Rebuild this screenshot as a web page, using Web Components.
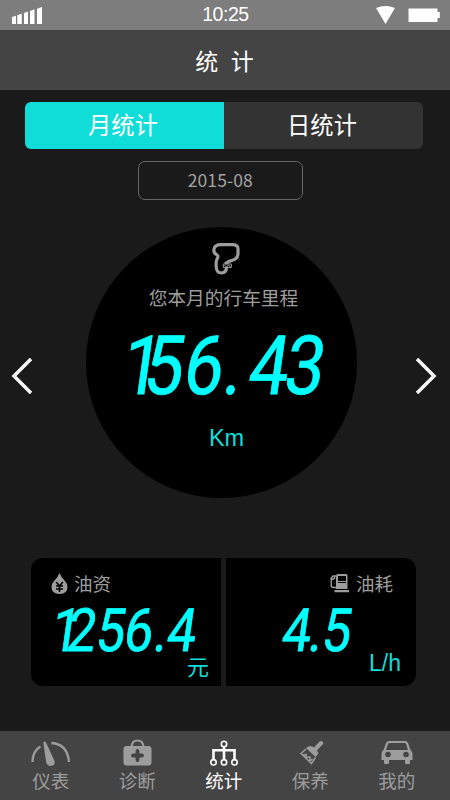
<!DOCTYPE html>
<html lang="zh-CN">
<head>
<meta charset="utf-8">
<title>统计</title>
<style>
html,body{margin:0;height:100%;background:#1a1a1a}
body{font-family:"Liberation Sans","Noto Sans CJK SC",sans-serif;color:#fff}
</style>
</head>
<body>
<stats-app></stats-app>
<script>
const define = (name, html, setup) => {
  const t = document.createElement('template');
  t.innerHTML = html;
  customElements.define(name, class extends HTMLElement {
    connectedCallback() {
      if (this.shadowRoot) return;
      this.attachShadow({mode: 'open'}).appendChild(t.content.cloneNode(true));
      if (setup) setup(this, this.shadowRoot);
    }
  });
};

define('status-bar', `
<style>
:host{display:grid;grid-template-columns:1fr auto 1fr;align-items:center;height:30px;box-sizing:border-box;background:#7d7d7d;padding:0 9px 0 12px;font-size:19.5px;line-height:28px}
svg{display:block}.time{height:30px;letter-spacing:-.45px;padding-right:2px}.right{justify-self:end}
</style>
<svg width="31" height="30" fill="#fff"><path d="M0 17l4-1.3V24H0zM5.3 15.3l4.5-1.7V24H5.3zM12 13l4-1.4V24h-4zM18 11l4.5-1.7V24H18zM25 8.7L30 7v17h-5z"/></svg>
<span class="time">10:25</span>
<svg class="right" width="65" height="30" fill="#fff"><path d="M0 8q9.500-4 19 0L9.500 24zM32.500 8.600h29V12h2.300v6h-2.300v4h-29z"/></svg>`);

define('title-bar', `
<style>:host{display:block;box-sizing:border-box;height:60px;padding-top:2px;background:#444;text-align:center;font-size:23px;line-height:60px;word-spacing:6px;text-indent:-1px}</style><slot></slot>`);

define('segment-tabs', `
<style>
:host{display:flex;width:398px;height:46.500px;margin:12.300px 0 0 25px;border-radius:6px;overflow:hidden;background:#333;font-size:23.300px;line-height:49px;text-align:center}
div{flex:1;box-sizing:border-box;padding-right:3px}.on{background:#11ddd8}
</style><div class="on"><slot name="month"></slot></div><div><slot name="day"></slot></div>`);

define('date-field', `
<style>:host{display:block;box-sizing:border-box;width:164.500px;height:39px;margin:12.200px 0 0 138px;border:1.5px solid #666;border-radius:7px;color:#a3a3a3;font:17.500px/35px "Noto Sans CJK SC",sans-serif;text-align:center;letter-spacing:.1px}</style><slot></slot>`);

/* One text run with a start position for each digit, slanted and condensed. */
define('digital-value', `
<style>
:host{display:block}
svg{display:block;overflow:visible}
text{font-family:Roboto,sans-serif;fill:#00ffff;stroke:#00ffff;stroke-width:.8}
</style><svg><text></text></svg>`, (el, root) => {
  const h = +el.getAttribute('height'), w = +el.getAttribute('width'), k = .86;
  const svg = root.querySelector('svg'), t = root.querySelector('text');
  svg.setAttribute('width', w);
  svg.setAttribute('height', h);
  t.textContent = el.getAttribute('value');
  t.setAttribute('font-size', h / .72);
  t.setAttribute('x', el.getAttribute('stops').split(' ').map(n => n / k).join(' '));
  t.setAttribute('transform', `translate(0 ${h - 1}) skewX(-8) scale(${k} 1)`);
});

define('mileage-dial', `
<style>
:host{display:flex;align-items:center;height:271px;margin-top:27px}
.dial{box-sizing:border-box;width:271px;height:271px;border-radius:50%;background:#000;display:flex;flex-direction:column;align-items:center;padding:16px 0 0 9px}
.left{margin:28px 53px 0 11px}.right{margin:28px 0 0 58px}
.label{font-size:18.700px;line-height:26px;color:#9d9d9d;margin:11px 5px 0 0}
digital-value{margin:24px 6px 0 0}
.unit{font-size:23.500px;line-height:28px;color:#11ddd8;margin:29px -1px 0 0}
svg{display:block;flex:none}
</style>
<svg class="left" width="22" height="38" fill="none" stroke="#fff" stroke-width="3.400"><path d="M20 2L3 19l17 17"/></svg>
<div class="dial">
<svg width="28" height="32" fill="none" stroke="#9d9d9d" stroke-width="3.200"><path d="M13 21q4-3 7-3.600 6-1.500 6-7V6q0-4-5-4.300H9Q3 1.600 2 6q-.7 4 2.500 5.500Q7 13 5 16q-1.200 2-.8 8 .4 6 5.500 6Q14 29.500 14.500 25"/><path stroke-width="1" fill="#000" d="M11.300 21h8v3.500h-8zM12.500 22l2 2 2-2 2 2"/></svg>
<div class="label"><slot name="label"></slot></div>
<digital-value value="156.43" width="196" height="59" stops="-6 16 56 96 121 157"></digital-value>
<div class="unit"><slot name="unit"></slot></div>
</div>
<svg class="right" width="22" height="38" fill="none" stroke="#fff" stroke-width="3.400"><path d="M2 2l17 17L2 36"/></svg>`);

define('fuel-card', `
<style>
:host{display:flex;flex-direction:column;box-sizing:border-box;flex:1;height:128px;background:#000;border-radius:var(--radius);padding:13px 12px 0 20px}
.head{display:flex;align-items:center;gap:6px;height:26px;font-size:18.500px;color:#9d9d9d}
::slotted(span[slot=label]){line-height:26px;padding-top:2px}
.unit{align-self:flex-end;font-size:22px;line-height:24px;color:#11ddd8;margin-top:4px}
::slotted(svg){display:block}
:host([end]) .head{align-self:flex-end;margin-right:11px}
:host([end]) .unit{margin:-1px 3px 0 0;font-size:23px}
::slotted(digital-value){margin:12px 0 0 2px}
:host([end]) ::slotted(digital-value){margin-left:34px}
</style><div class="head"><slot name="icon"></slot><slot name="label"></slot></div><slot></slot><div class="unit"><slot name="unit"></slot></div>`);

define('nav-item', `
<style>:host{display:flex;flex-direction:column;align-items:center;width:86.500px;color:#9d9d9d;font-size:18.500px;line-height:27px}:host([active]){color:#fff}::slotted(svg){display:block}</style><slot name="icon"></slot><span><slot></slot></span>`);

define('tab-bar', `
<style>:host{display:flex;box-sizing:border-box;height:69px;background:#444;margin-top:auto;padding:8px 0 0 7.500px}</style><slot></slot>`);

define('stats-app', `
<style>
:host{display:flex;flex-direction:column;width:450px;height:800px;background:#1a1a1a;overflow:hidden}
.cards{display:flex;gap:5px;width:385px;margin:60px 0 0 31px}
</style>
<status-bar></status-bar>
<title-bar>统 计</title-bar>
<segment-tabs><span slot="month">月统计</span><span slot="day">日统计</span></segment-tabs>
<date-field>2015-08</date-field>
<mileage-dial><span slot="label">您本月的行车里程</span><span slot="unit">Km</span></mileage-dial>
<div class="cards">
<fuel-card style="--radius:12px 0 0 12px">
<svg slot="icon" width="17" height="22"><path fill="#9d9d9d" d="M8.500 0Q10 4 13.500 7.500 16.500 10.500 16.500 14q0 7-8 7t-8-7q0-3.500 3-6.500Q7 4 8.500 0z"/><path fill="none" stroke="#000" stroke-width="1.600" d="M5.200 9l3.300 4 3.300-4M8.500 12v7M5 13h7M5 16h7"/></svg>
<span slot="label">油资</span><digital-value value="1256.4" width="145" height="43" stops="-4 12 41 69 99 112"></digital-value><span slot="unit">元</span></fuel-card>
<fuel-card end style="--radius:0 12px 12px 0">
<svg slot="icon" width="20" height="21"><path fill="#9d9d9d" fill-rule="evenodd" d="M8 1h8q1.500 0 1.500 1.500V16H6V3q0-2 2-2zM8 3v5h8V3zM8 9v1h8V9zM4.500 17H19v2.200H4.500z"/><path fill="none" stroke="#9d9d9d" stroke-width="1.400" d="M6 3H3L1.200 5v7.500q0 2 2.200 2H6M1.500 6.500l3-1V3"/></svg>
<span slot="label">油耗</span><digital-value value="4.5" width="70" height="43" stops="0 27 40"></digital-value><span slot="unit">L/h</span></fuel-card>
</div>
<tab-bar>
<nav-item><svg slot="icon" width="40" height="29" fill="none" stroke="#9d9d9d" stroke-width="2.300"><path d="M1.500 23Q1.500 12 9.500 7.500M20.500 4Q36.500 5 38 23"/><path fill="#9d9d9d" stroke="none" d="M12.300 3.500q1.500-2 2.700 0l8.500 18.500q1 4.500-3.500 5-4.500 0-5-5z"/></svg>仪表</nav-item>
<nav-item><svg slot="icon" width="29" height="29"><path fill="none" stroke="#9d9d9d" stroke-width="2" d="M8.500 8Q9 1.500 14.500 1.500T20.500 8"/><rect x=".5" y="7" width="28" height="19.500" rx="3" fill="#9d9d9d"/><path stroke="#444" stroke-width="3.800" stroke-linecap="round" d="M14.500 12v9M10 16.500h9"/></svg>诊断</nav-item>
<nav-item active><svg slot="icon" width="28" height="29" fill="none" stroke="#fff" stroke-width="1.600"><circle cx="14" cy="5" r="2.700"/><circle cx="3.500" cy="23.300" r="2.700"/><circle cx="14" cy="23.300" r="2.700"/><circle cx="24.500" cy="23.300" r="2.700"/><path stroke-width="2.600" d="M14 8v12M3.500 20v-8.700h21V20"/></svg>统计</nav-item>
<nav-item><svg slot="icon" width="28" height="29"><path fill="#9d9d9d" d="M18 8.500l5.500-6q3-1.500 4 2L21 11.500q2 2 .5 4l-2 2.500L10 9l2.500-1.500q3-1 5.500 1z"/><path fill="none" stroke="#9d9d9d" stroke-width="1.500" d="M10 10l-5 4.500 10.500 10 4-6M7 16l3-.5v3l4-.5v4l2.500-2"/></svg>保养</nav-item>
<nav-item><svg slot="icon" width="32" height="29"><path fill="#9d9d9d" fill-rule="evenodd" d="M8 2h16q2 0 3 2l2.500 7q2 1.500 2 4v6H29v3q0 1-1 1h-3q-1 0-1-1v-3H8v3q0 1-1 1H4q-1 0-1-1v-3H.5v-6q0-2.500 2-4L5 4q1-2 3-2zM8.500 4q-1 0-1.500 1l-2 6h22l-2-6q-.5-1-1.500-1z"/><circle cx="7" cy="15.500" r="2.800" fill="#444"/><circle cx="25" cy="15.500" r="2.800" fill="#444"/></svg>我的</nav-item>
</tab-bar>`);
</script>
</body>
</html>
